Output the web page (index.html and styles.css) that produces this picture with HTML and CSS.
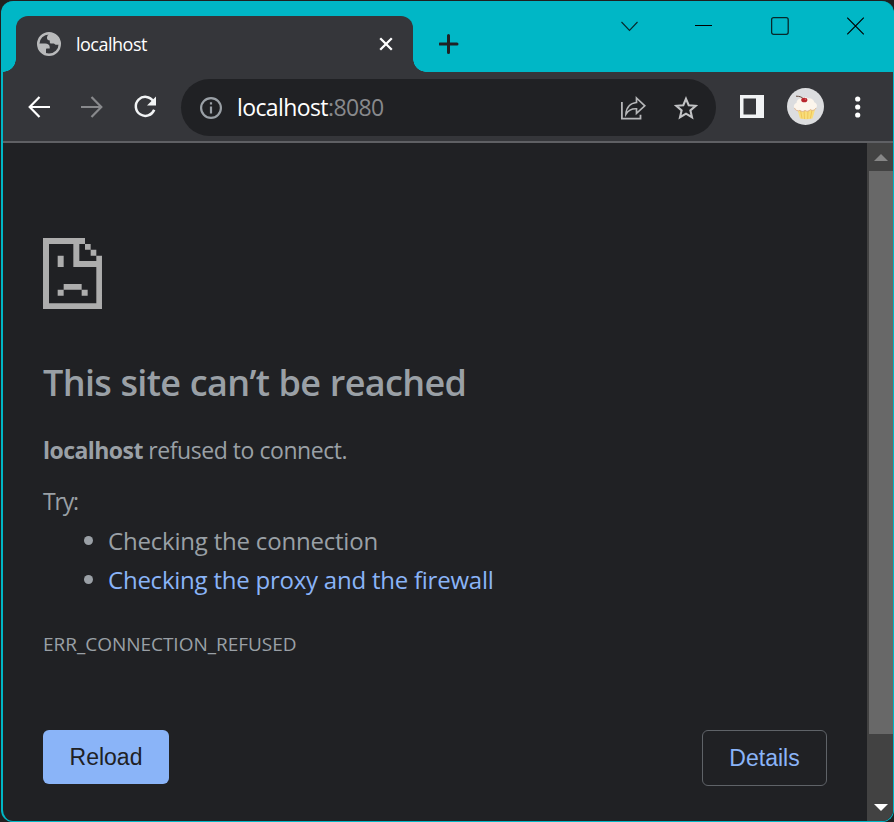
FILE: index.html
```
<!DOCTYPE html>
<html lang="en">
<head>
<meta charset="utf-8">
<title>localhost</title>
<link rel="stylesheet" href="styles.css">
</head>
<body>
<div class="window">
  <header class="tabstrip">
    <div class="tab">
      <svg class="globe" viewBox="0 0 24 24" width="24" height="24"><circle cx="12" cy="12" r="10.800" fill="none" stroke="#b9babb" stroke-width="2.400"/><path fill="#b9babb" d="M12.500 1.500c-2 1.300-2.500 3-2.500 4.500 0 1.600 1 2.300 2.800 2.400v1.800c0 .8.600 1.400 1.400 1.400h2.500c.8 0 1.100 1.100 2 1.100h4.300C23 5 18 1 12.500 1.500zM1.500 11.500h6.600c2.800 0 4.600 1.400 4.600 3.600v1.500H10c-.6 0-1 .5-1 1.100v4.800C4 21.500 1 17 1.500 11.500z"/></svg>
      <span class="tab-title">localhost</span>
      <svg class="tab-close" viewBox="0 0 14 14" width="14" height="14"><path d="M1.200 1.200l11.600 11.600M12.800 1.200L1.200 12.800" stroke="#fff" stroke-width="2.300" fill="none"/></svg>
    </div>
    <svg class="newtab" viewBox="0 0 20 20" width="20" height="20"><path d="M9.500 1.500v17M1 10h17" stroke="#202124" stroke-width="3" stroke-linecap="round"/></svg>
    <div class="controls">
      <svg class="chevron" viewBox="0 0 18 18" width="18" height="18"><path d="M.5 5l8 8.500L16.500 5" fill="none" stroke="#07282b" stroke-width="1.100"/></svg>
      <svg viewBox="0 0 18 18" width="18" height="18"><path d="M0 8.500h17" stroke="#000" stroke-width="1.100"/></svg>
      <svg viewBox="0 0 18 18" width="18" height="18"><rect x=".6" y=".7" width="16.600" height="16.600" rx="2" fill="none" stroke="#07282b" stroke-width="1.300"/></svg>
      <svg viewBox="0 0 18 18" width="18" height="18"><path d="M.2.700l16.600 16.600M16.800.7L.2 17.300" stroke="#000" stroke-width="1.200"/></svg>
    </div>
  </header>
  <nav class="toolbar">
    <svg class="back" viewBox="0 0 22 22" width="22" height="22"><path d="M11.500 1L1.700 11l9.800 10M1.700 11H22" fill="none" stroke="#fff" stroke-width="2.200"/></svg>
    <svg class="forward" viewBox="0 0 22 22" width="22" height="22"><path d="M10.500 1l9.800 10-9.800 10M20.300 11H0" fill="none" stroke="#88898c" stroke-width="2.200"/></svg>
    <svg class="refresh" viewBox="0 0 24 24" width="24" height="24"><path d="M20.300 6.200A9.500 9.500 0 1 0 21.200 14.700" fill="none" stroke="#f1f3f4" stroke-width="2.500"/><path d="M23 1.500v9h-9z" fill="#f1f3f4"/></svg>
    <div class="omnibox">
      <svg viewBox="0 0 22 22" width="22" height="22"><circle cx="11" cy="11" r="9.900" fill="none" stroke="#9aa0a6" stroke-width="2.200"/><path d="M11 9.500v7M11 5.200v2.400" stroke="#9aa0a6" stroke-width="2.200"/></svg>
      <span class="url">localhost<span class="port">:8080</span></span>
      <svg class="share" viewBox="0 0 26 24" width="26" height="24"><path d="M1.900 6v16.700h18.600v-4" fill="none" stroke="#b6b7b9" stroke-width="1.800"/><path d="M16.500 2l8.300 7.800-8.300 7.600v-4.600c-4.700-.3-8 1.200-10.500 5.200.3-6.600 4.300-11 10.500-11.500z" fill="none" stroke="#b6b7b9" stroke-width="1.700"/></svg>
      <svg class="star" viewBox="0 0 24 24" width="24" height="24"><path d="M12 2.800l2.700 6.400 7 .6-5.300 4.600 1.600 6.800-6-3.600-6 3.600 1.600-6.800-5.300-4.600 7-.6z" fill="none" stroke="#c2c3c5" stroke-width="2.100"/></svg>
    </div>
    <svg class="panel" viewBox="0 0 24 23" width="24" height="23"><path fill="#f1f3f4" fill-rule="evenodd" d="M0 0h24v23H0zM3.500 3.500v16H16v-16z"/></svg>
    <svg class="avatar" viewBox="0 0 37 37" width="37" height="37"><circle cx="18.500" cy="18.500" r="18.500" fill="#dcdddf"/><path d="M10 20h18.500l-3 10.500q-6.200 1.500-12.500 0z" fill="#f8dd7c"/><path d="M13.500 22l1.500 8.500M17 22l.5 9M21 22l-.3 9M25 22l-1.600 8.500" stroke="#ecc04f" stroke-width=".8"/><path d="M7.500 20c-1.500-2 0-4.500 2-5 0-3 2.500-5 5-4.500 2-1.500 5-1.500 6.500-.2 3-.6 6 1.200 6.300 4 2.500.8 3.600 4 1.700 5.800-1.500 2.500-4 2.800-5.500 1.500-2 2-4 2-5.500.8-1.800 1.600-4 1.200-5-.1-2 1.200-4.500.1-5.500-2.300z" fill="#fcf5ec"/><path d="M7.500 20c1 2.600 3.500 3.500 5.500 2.300 1 1.300 3.200 1.700 5 .1 1.500 1.200 3.500 1.200 5.500-.8 1.500 1.300 4 1 5.500-1.500" stroke="#deb08b" stroke-width=".9" fill="none"/><path d="M16.500 11c-2-2.300-4-2.800-7.500-2.800" stroke="#694c40" fill="none"/><ellipse cx="17.300" cy="12" rx="3.100" ry="2.300" fill="#b9272e"/><circle cx="18.300" cy="11.100" r=".6" fill="#e88a8a"/></svg>
    <svg class="menu" viewBox="0 0 6 22" width="6" height="22"><g fill="#fff"><circle cx="2.700" cy="3" r="2.600"/><circle cx="2.700" cy="11" r="2.600"/><circle cx="2.700" cy="19" r="2.600"/></g></svg>
  </nav>
  <div class="viewport">
    <main class="page">
      <svg class="sad" viewBox="0 0 177 214" width="59" height="71.300"><path fill="#adadad" d="M0 0h126v18h-17v51h51V53h17v161H0zM18 18v178h142V87H91V18zM126 18h17v17h-17zM143 35h17v18h-17zM44 53h18v34H44zM62 138h54v17H62zM44 155h18v18H44zM116 155h18v18h-18z" fill-rule="evenodd"/></svg>
      <h1>This site can’t be reached</h1>
      <p class="summary"><strong>localhost</strong> refused to connect.</p>
      <p class="try">Try:</p>
      <ul>
        <li>Checking the connection</li>
        <li><a>Checking the proxy and the firewall</a></li>
      </ul>
      <p class="code">ERR_CONNECTION_REFUSED</p>
      <div class="buttons">
        <button class="reload">Reload</button>
        <button class="details">Details</button>
      </div>
    </main>
    <div class="scrollbar">
      <svg viewBox="0 0 14 7" width="14" height="7"><path d="M0 7L7 0l7 7z" fill="#868686"/></svg>
      <div class="thumb"></div>
      <svg class="down" viewBox="0 0 14 7" width="14" height="7"><path d="M0 0h14L7 7z" fill="#fff"/></svg>
    </div>
  </div>
</div>
</body>
</html>
```
FILE: styles.css
```
* { box-sizing: border-box; }
body { margin: 0; padding: 1px 0 0 1px; height: 822px; overflow: hidden; background: #202020; font-family: "Open Sans", "Noto Sans", sans-serif; }
svg { display: block; flex: none; }
.window { width: 893px; height: 821px; background: #00b7c6; border: solid #00b7c6; border-width: 0 1px 1px 2px; border-radius: 12px; overflow: hidden; }
.tabstrip { display: flex; height: 71px; padding: 15px 28px 0 13px; }
.tab { position: relative; display: flex; align-items: center; width: 397px; height: 56px; padding: 0 20px 0 21px; background: #35363a; border-radius: 12px 12px 0 0; }
.tab::before, .tab::after { content: ""; position: absolute; bottom: 0; width: 13px; height: 13px; }
.tab::before { left: -13px; background: radial-gradient(circle at 0 0, #00b7c6 12.500px, #35363a 13px); }
.tab::after { right: -13px; background: radial-gradient(circle at 100% 0, #00b7c6 12.500px, #35363a 13px); }
.tab-title { flex: 1; margin-left: 15px; color: #fff; font-size: 18px; letter-spacing: -.5px; line-height: 28px; }
.newtab { margin: 18px 0 0 26px; }
.controls { display: flex; gap: 58px; margin-left: auto; padding-top: 1px; }
.chevron { margin-right: -2px; }
.toolbar { display: flex; align-items: center; height: 71px; padding: 0 31px 0 25px; background: #35363a; border-bottom: 2px solid #5f6064; }
.forward { margin-left: 31px; }
.refresh { margin-left: 30px; }
.omnibox { display: flex; align-items: center; width: 535px; height: 57px; margin: 2px 0 0 24px; padding: 0 18px 0 19px; border-radius: 29px; background: #202124; }
.url { flex: 1; margin: 0 0 2px 15px; color: #fff; font-size: 23px; letter-spacing: -.6px; line-height: 34px; }
.port { color: #88898c; }
.star { margin-left: 28px; }
.panel { margin-left: 24px; }
.avatar { margin-left: 23px; }
.menu { margin-left: 31px; }
.viewport { display: flex; height: 678px; background: #202124; }
.page { width: 864px; padding: 94.500px 40px 0; color: #9aa0a6; }
.page h1 { margin: 51px 0 0; font-size: 36px; font-weight: 600; line-height: 46px; letter-spacing: -.65px; word-spacing: .6px; white-space: nowrap; }
.page p { margin: 0; line-height: 36px; white-space: nowrap; }
.page .summary { margin-top: 26px; font-size: 23px; letter-spacing: -.45px; }
.page .summary strong { letter-spacing: -.55px; }
.page .try { margin-top: 15px; font-size: 23px; letter-spacing: -1.200px; }
.page ul { margin: 2px 0 0; padding: 0 0 0 41px; list-style: none; font-size: 24px; line-height: 39px; letter-spacing: -.2px; }
.page li { display: flex; align-items: center; }
.page li::before { content: ""; width: 9px; height: 9px; margin-right: 15px; border-radius: 50%; background: #9aa0a6; }
.page a { color: #8ab4f8; letter-spacing: -.23px; }
.page .code { margin-top: 27px; font-size: 19px; letter-spacing: -.03px; }
.buttons { display: flex; justify-content: space-between; align-items: flex-start; margin-top: 68px; }
.buttons button { padding: 2px 0 0; border-radius: 6px; font: 23px "Liberation Sans", Arial, sans-serif; }
.reload { width: 126px; height: 54px; border: 0; background: #8ab4f8; color: #202124; }
.details { width: 125px; height: 56px; border: 1px solid #5f6368; background: transparent; color: #8ab4f8; }
.scrollbar { display: flex; flex-direction: column; align-items: center; width: 26px; padding: 11px 0 0 2px; background: #424242; }
.thumb { width: 24px; height: 563px; margin: 10px 0 70px; background: #686868; }
```
